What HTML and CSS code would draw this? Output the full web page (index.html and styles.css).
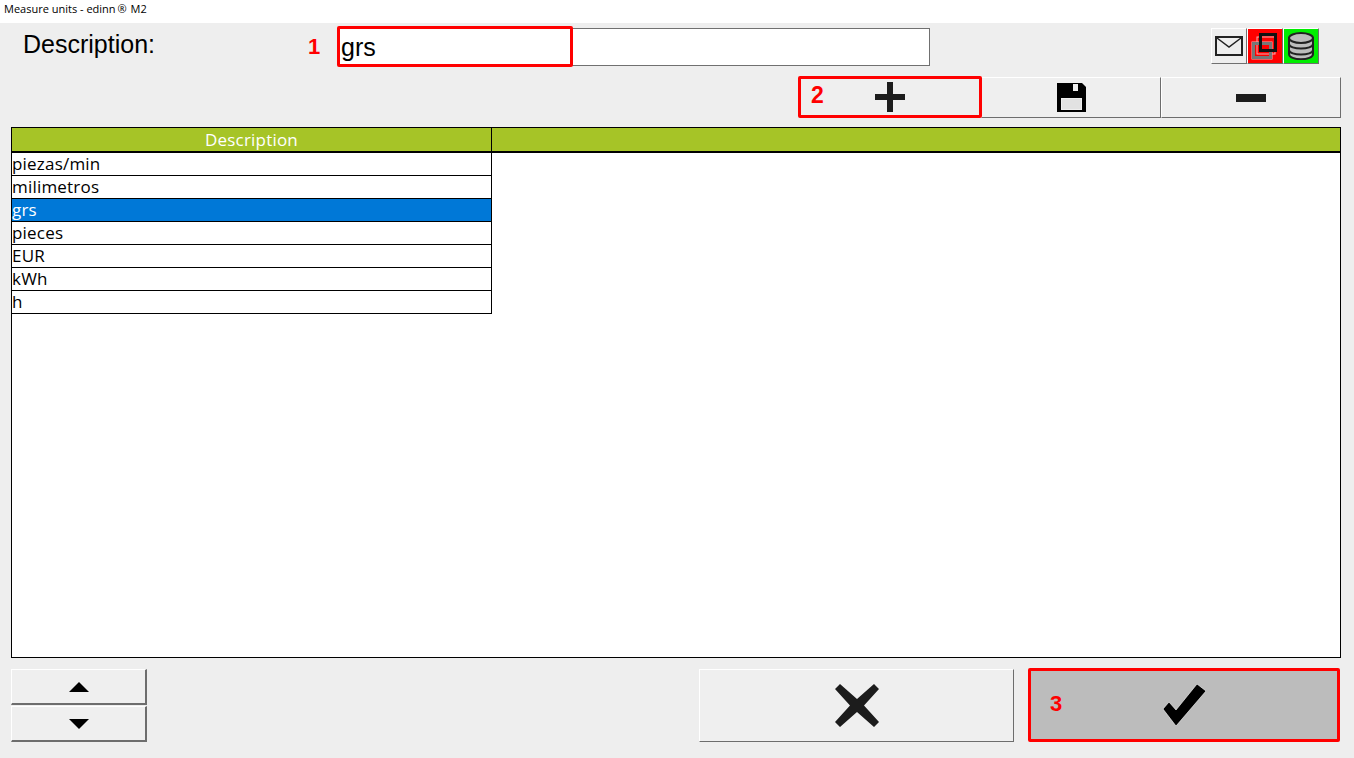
FILE: index.html
```html
<!DOCTYPE html>
<html lang="en">
<head>
    <meta charset="UTF-8">
    <title>Measure units - edinn® M2</title>
    <link rel="stylesheet" href="styles.css">
</head>
<body>
    <div class="titlebar">Measure units - edinn<span class="reg">®</span> M2</div>

    <div class="main">
        <div class="top-row">
            <div class="field-label">Description:</div>
            <div class="mark mark-1">1</div>
            <div class="input-wrap">
                <div class="text-input">grs</div>
                <div class="red-box"></div>
            </div>
            <div class="status-icons">
                <div class="status-btn">
                    <svg width="28" height="20" viewBox="0 0 28 20"><rect x="1" y="1" width="26" height="18" fill="none" stroke="#222" stroke-width="2"/><path d="M2 2 L14 11 L26 2" fill="none" stroke="#222" stroke-width="1.5"/></svg>
                </div>
                <div class="status-btn red">
                    <svg width="32" height="30" viewBox="0 0 32 30"><rect x="8" y="6" width="18" height="17" fill="none" stroke="#f3b0b0" stroke-width="1"/><rect x="3" y="11" width="20" height="17" fill="none" stroke="#f3b0b0" stroke-width="1"/><rect x="4.5" y="12.5" width="17" height="14" fill="none" stroke="#777" stroke-width="3"/><rect x="11.5" y="3.5" width="15" height="16" fill="none" stroke="#111" stroke-width="3"/></svg>
                </div>
                <div class="status-btn green">
                    <svg width="26" height="28" viewBox="0 0 26 28"><path d="M1 6 V22 C1 29 25 29 25 22 V6 Z" fill="#bdbdbd" stroke="#222" stroke-width="2"/><ellipse cx="13" cy="6" rx="12" ry="5" fill="#bdbdbd" stroke="#222" stroke-width="2"/><path d="M1 12 C1 18 25 18 25 12 M1 18 C1 24 25 24 25 18" fill="none" stroke="#222" stroke-width="2"/></svg>
                </div>
            </div>
        </div>

        <div class="toolbar">
            <button class="btn tool-btn outlined">
                <span class="mark mark-2">2</span>
                <svg width="30" height="30" viewBox="0 0 30 30"><path d="M0 12 H12 V0 H18 V12 H30 V18 H18 V30 H12 V18 H0 Z" fill="#1c1c1c"/></svg>
            </button>
            <button class="btn tool-btn">
                <svg width="29" height="29" viewBox="0 0 29 29"><path fill-rule="evenodd" d="M0 0 H25 L29 4 V29 H0 Z M16 1 V8 H21 V1 Z M4 15 V27 H25 V15 Z" fill="#000"/><rect x="5" y="16" width="19" height="10" fill="#e2e2e2"/></svg>
            </button>
            <button class="btn tool-btn">
                <svg width="30" height="8" viewBox="0 0 30 8"><rect width="30" height="8" fill="#1c1c1c"/></svg>
            </button>
        </div>

        <div class="grid">
            <div class="grid-head">
                <div class="head-cell">Description</div>
                <div class="head-rest"></div>
            </div>
            <div class="rows">
                <div class="row">piezas/min</div>
                <div class="row">milimetros</div>
                <div class="row selected">grs</div>
                <div class="row">pieces</div>
                <div class="row">EUR</div>
                <div class="row">kWh</div>
                <div class="row">h</div>
            </div>
        </div>

        <div class="footer">
            <div class="arrows">
                <button class="btn arrow-btn">
                    <svg width="20" height="10" viewBox="0 0 20 10"><path d="M10 0 L20 10 H0 Z" fill="#000"/></svg>
                </button>
                <button class="btn arrow-btn">
                    <svg width="20" height="10" viewBox="0 0 20 10"><path d="M0 0 H20 L10 10 Z" fill="#000"/></svg>
                </button>
            </div>
            <div class="actions">
                <button class="btn cancel-btn">
                    <svg width="44" height="43" viewBox="0 0 44 43"><path d="M5 0 L22 15 L39 0 L44 5 L29 21.5 L44 38 L39 43 L22 28 L5 43 L0 38 L15 21.5 L0 5 Z" fill="#1c1c1c"/></svg>
                </button>
                <button class="btn ok-btn">
                    <span class="mark mark-3">3</span>
                    <svg width="43" height="42" viewBox="0 0 43 42"><path d="M0 25 L6 18 L13 26 L34 0 L43 7 L13 42 Z" fill="#000" stroke="#fff" stroke-width="0.6"/></svg>
                </button>
            </div>
        </div>
    </div>
</body>
</html>
```

FILE: styles.css
```css
* {
    box-sizing: border-box;
}
body {
    margin: 0;
    height: 758px;
    overflow: hidden;
    background: #eeeeee;
    font-family: "Open Sans", sans-serif;
    color: #000;
}
.titlebar {
    height: 23px;
    padding: 2px 0 0 4px;
    background: white;
    font-size: 11px;
    line-height: 14px;
}
.reg {
    margin: 0 1px 0 2px;
}
.main {
    padding: 0 13px 0 11px;
}

/* top row */
.top-row {
    display: flex;
    height: 54px;
}
.field-label {
    width: 297px;
    padding: 4px 0 0 12px;
    font-family: "Liberation Sans", sans-serif;
    font-size: 25px;
    line-height: 35px;
}
.mark {
    color: #ff0000;
    font-family: "Liberation Sans", sans-serif;
    font-weight: bold;
}
.mark-1 {
    width: 30px;
    padding-top: 11px;
    font-size: 22px;
    line-height: 26px;
}
.input-wrap {
    position: relative;
    width: 592px;
    height: 38px;
    margin-top: 5px;
}
.text-input {
    height: 38px;
    padding-left: 2px;
    background: white;
    border: 1px solid #707070;
    font-family: "Liberation Sans", sans-serif;
    font-size: 25px;
    line-height: 36px;
}
.red-box {
    position: absolute;
    left: -1px;
    top: -2px;
    width: 236px;
    height: 41px;
    border: 3px solid #ff0000;
    border-radius: 2px;
}
.status-icons {
    display: flex;
    margin-left: auto;
    margin-top: 5px;
    margin-right: 22px;
}
.status-btn {
    display: flex;
    align-items: center;
    justify-content: center;
    width: 36px;
    height: 36px;
    border-top: 1px solid white;
    border-left: 1px solid white;
    border-right: 1px solid #707070;
    border-bottom: 1px solid #707070;
}
.status-btn.red {
    background: #ff0000;
}
.status-btn.green {
    background: #00ee00;
}

/* buttons */
.btn {
    display: flex;
    align-items: center;
    justify-content: center;
    position: relative;
    padding: 0;
    background: #efefef;
    border-top: 1px solid white;
    border-left: 1px solid white;
    border-right: 1px solid #6d6d6d;
    border-bottom: 1px solid #6d6d6d;
    border-radius: 0;
}
.toolbar {
    display: flex;
    justify-content: flex-end;
    height: 41px;
}
.tool-btn {
    width: 180px;
    height: 41px;
}
.tool-btn.outlined {
    width: 184px;
    height: 42px;
    margin-top: -1px;
    margin-right: -1px;
    z-index: 1;
    border: 3px solid #ff0000;
    border-radius: 2px;
}
.mark-2 {
    position: absolute;
    left: 10px;
    top: 3px;
    font-size: 23px;
    line-height: 26px;
}

/* table */
.grid {
    height: 531px;
    margin-top: 9px;
    background: white;
    border: 1px solid #000;
}
.grid-head {
    display: flex;
    height: 25px;
    background: #a6c427;
    border-bottom: 2px solid #000;
}
.head-cell {
    width: 480px;
    border-right: 1px solid #000;
    color: white;
    font-size: 17px;
    font-weight: 500;
    letter-spacing: 0.2px;
    line-height: 24px;
    text-align: center;
}
.head-rest {
    flex: 1;
}
.rows {
    width: 480px;
    border-right: 1px solid #000;
}
.row {
    height: 23px;
    border-bottom: 1px solid #000;
    font-size: 17px;
    font-weight: 500;
    letter-spacing: 0.2px;
    line-height: 22px;
}
.row.selected {
    background: #0078d7;
    color: white;
}

/* bottom */
.footer {
    display: flex;
    justify-content: space-between;
    margin-top: 11px;
}
.arrows {
    display: flex;
    flex-direction: column;
    gap: 1px;
}
.arrow-btn {
    width: 136px;
    height: 36px;
    border-right-width: 2px;
    border-bottom-width: 2px;
}
.actions {
    display: flex;
    gap: 14px;
    margin-right: 1px;
}
.cancel-btn {
    width: 315px;
    height: 73px;
}
.ok-btn {
    width: 312px;
    height: 74px;
    margin-top: -1px;
    background: #bcbcbc;
    border: 3px solid #ff0000;
    border-radius: 2px;
}
.mark-3 {
    position: absolute;
    left: 19px;
    top: 20px;
    font-size: 22px;
    line-height: 26px;
}
```
